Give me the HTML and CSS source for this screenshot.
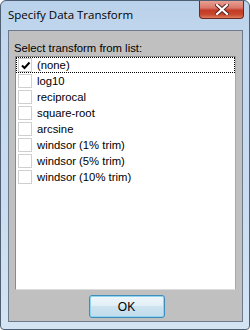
FILE: index.html
```html
<!DOCTYPE html>
<html>
<head>
<meta charset="utf-8">
<link rel="stylesheet" href="styles.css">
</head>
<body>
<div class="window">
  <div class="titlebar">
    <span class="title">Specify Data Transform</span>
    <div class="close">
      <svg width="14" height="11" viewBox="0 0 14 11">
        <path d="M2 1 L12 10 M12 1 L2 10" stroke="#5a2020" stroke-width="4" stroke-linecap="square" fill="none"/>
        <path d="M2 1 L12 10 M12 1 L2 10" stroke="#ffffff" stroke-width="2.2" stroke-linecap="square" fill="none"/>
      </svg>
    </div>
  </div>
  <div class="client">
    <div class="label">Select transform from list:</div>
    <div class="list">
      <div class="row focus"><span class="cb"><svg width="11" height="11" viewBox="0 0 11 11"><path d="M2 5.5 L4.5 8 L9.5 2.5" stroke="#000" stroke-width="2" fill="none"/></svg></span><span>(none)</span></div>
      <div class="row"><span class="cb"></span><span>log10</span></div>
      <div class="row"><span class="cb"></span><span>reciprocal</span></div>
      <div class="row"><span class="cb"></span><span>square-root</span></div>
      <div class="row"><span class="cb"></span><span>arcsine</span></div>
      <div class="row"><span class="cb"></span><span>windsor (1% trim)</span></div>
      <div class="row"><span class="cb"></span><span>windsor (5% trim)</span></div>
      <div class="row"><span class="cb"></span><span>windsor (10% trim)</span></div>
    </div>
    <div class="buttons">
      <button class="ok">OK</button>
    </div>
  </div>
</div>
</body>
</html>
```
FILE: styles.css
```css
html, body {
  margin: 0;
  padding: 0;
  background: #ffffff;
}
.window {
  box-sizing: border-box;
  width: 250px;
  height: 330px;
  border: 1px solid #4f5f74;
  border-radius: 6px 6px 4px 4px;
  background: linear-gradient(180deg, #b9d1ea 0px, #c3d8ee 40px, #cadcf0 200px, #d5e4f3 330px);
  display: flex;
  flex-direction: column;
  overflow: hidden;
}
.titlebar {
  height: 29px;
  display: flex;
  align-items: flex-start;
}
.title {
  font-family: "Open Sans", "DejaVu Sans", sans-serif;
  font-size: 11.5px;
  color: #000;
  padding-left: 7px;
  padding-top: 6px;
  line-height: 16px;
}
.close {
  margin-left: auto;
  margin-right: 5px;
  width: 45px;
  height: 18px;
  box-sizing: border-box;
  border: 1px solid #6b2a22;
  border-top: none;
  border-radius: 0 0 4px 4px;
  background: linear-gradient(180deg, #e8a093 0%, #d9786a 40%, #c43a25 55%, #c7492f 80%, #e07a5c 100%);
  display: flex;
  align-items: center;
  justify-content: center;
}
.client {
  box-sizing: border-box;
  margin: 0 6px 7px 7px;
  flex: 1;
  background: #c0c0c0;
  border: 1px solid #6b7a8c;
  display: flex;
  flex-direction: column;
}
.label {
  font-family: "Liberation Sans", Arial, sans-serif;
  font-size: 11.3px;
  line-height: 14px;
  margin: 10px 0 0 5px;
  color: #000;
}
.list {
  box-sizing: border-box;
  margin: 1px 6px 0 6px;
  height: 234px;
  background: #ffffff;
  border: 1px solid #8a8a8a;
  border-right-color: #a8a8a8;
  border-bottom-color: #dcdcdc;
  padding: 0;
}
.row {
  box-sizing: border-box;
  height: 16px;
  display: flex;
  align-items: center;
  font-family: "Liberation Sans", Arial, sans-serif;
  font-size: 11.3px;
  color: #000;
  border: 1px solid transparent;
}
.row.focus {
  border: 1px dotted #000;
}
.cb {
  box-sizing: border-box;
  width: 14px;
  height: 14px;
  margin-left: 1px;
  margin-right: 5px;
  border: 1px solid #cfcfcf;
  background: #ffffff;
  display: flex;
  align-items: center;
  justify-content: center;
}
.buttons {
  display: flex;
  justify-content: center;
  margin-top: 5px;
}
.ok {
  box-sizing: border-box;
  width: 76px;
  height: 23px;
  margin-left: 2px;
  border: 1px solid #3c8dbc;
  border-radius: 3px;
  background: linear-gradient(180deg, #eef7fc 0%, #e2eff6 45%, #cde3ef 50%, #c1dcec 100%);
  box-shadow: inset 0 0 0 1px #8fd5ef;
  font-family: "Liberation Sans", Arial, sans-serif;
  font-size: 12px;
  color: #000;
  padding: 0;
}
```
